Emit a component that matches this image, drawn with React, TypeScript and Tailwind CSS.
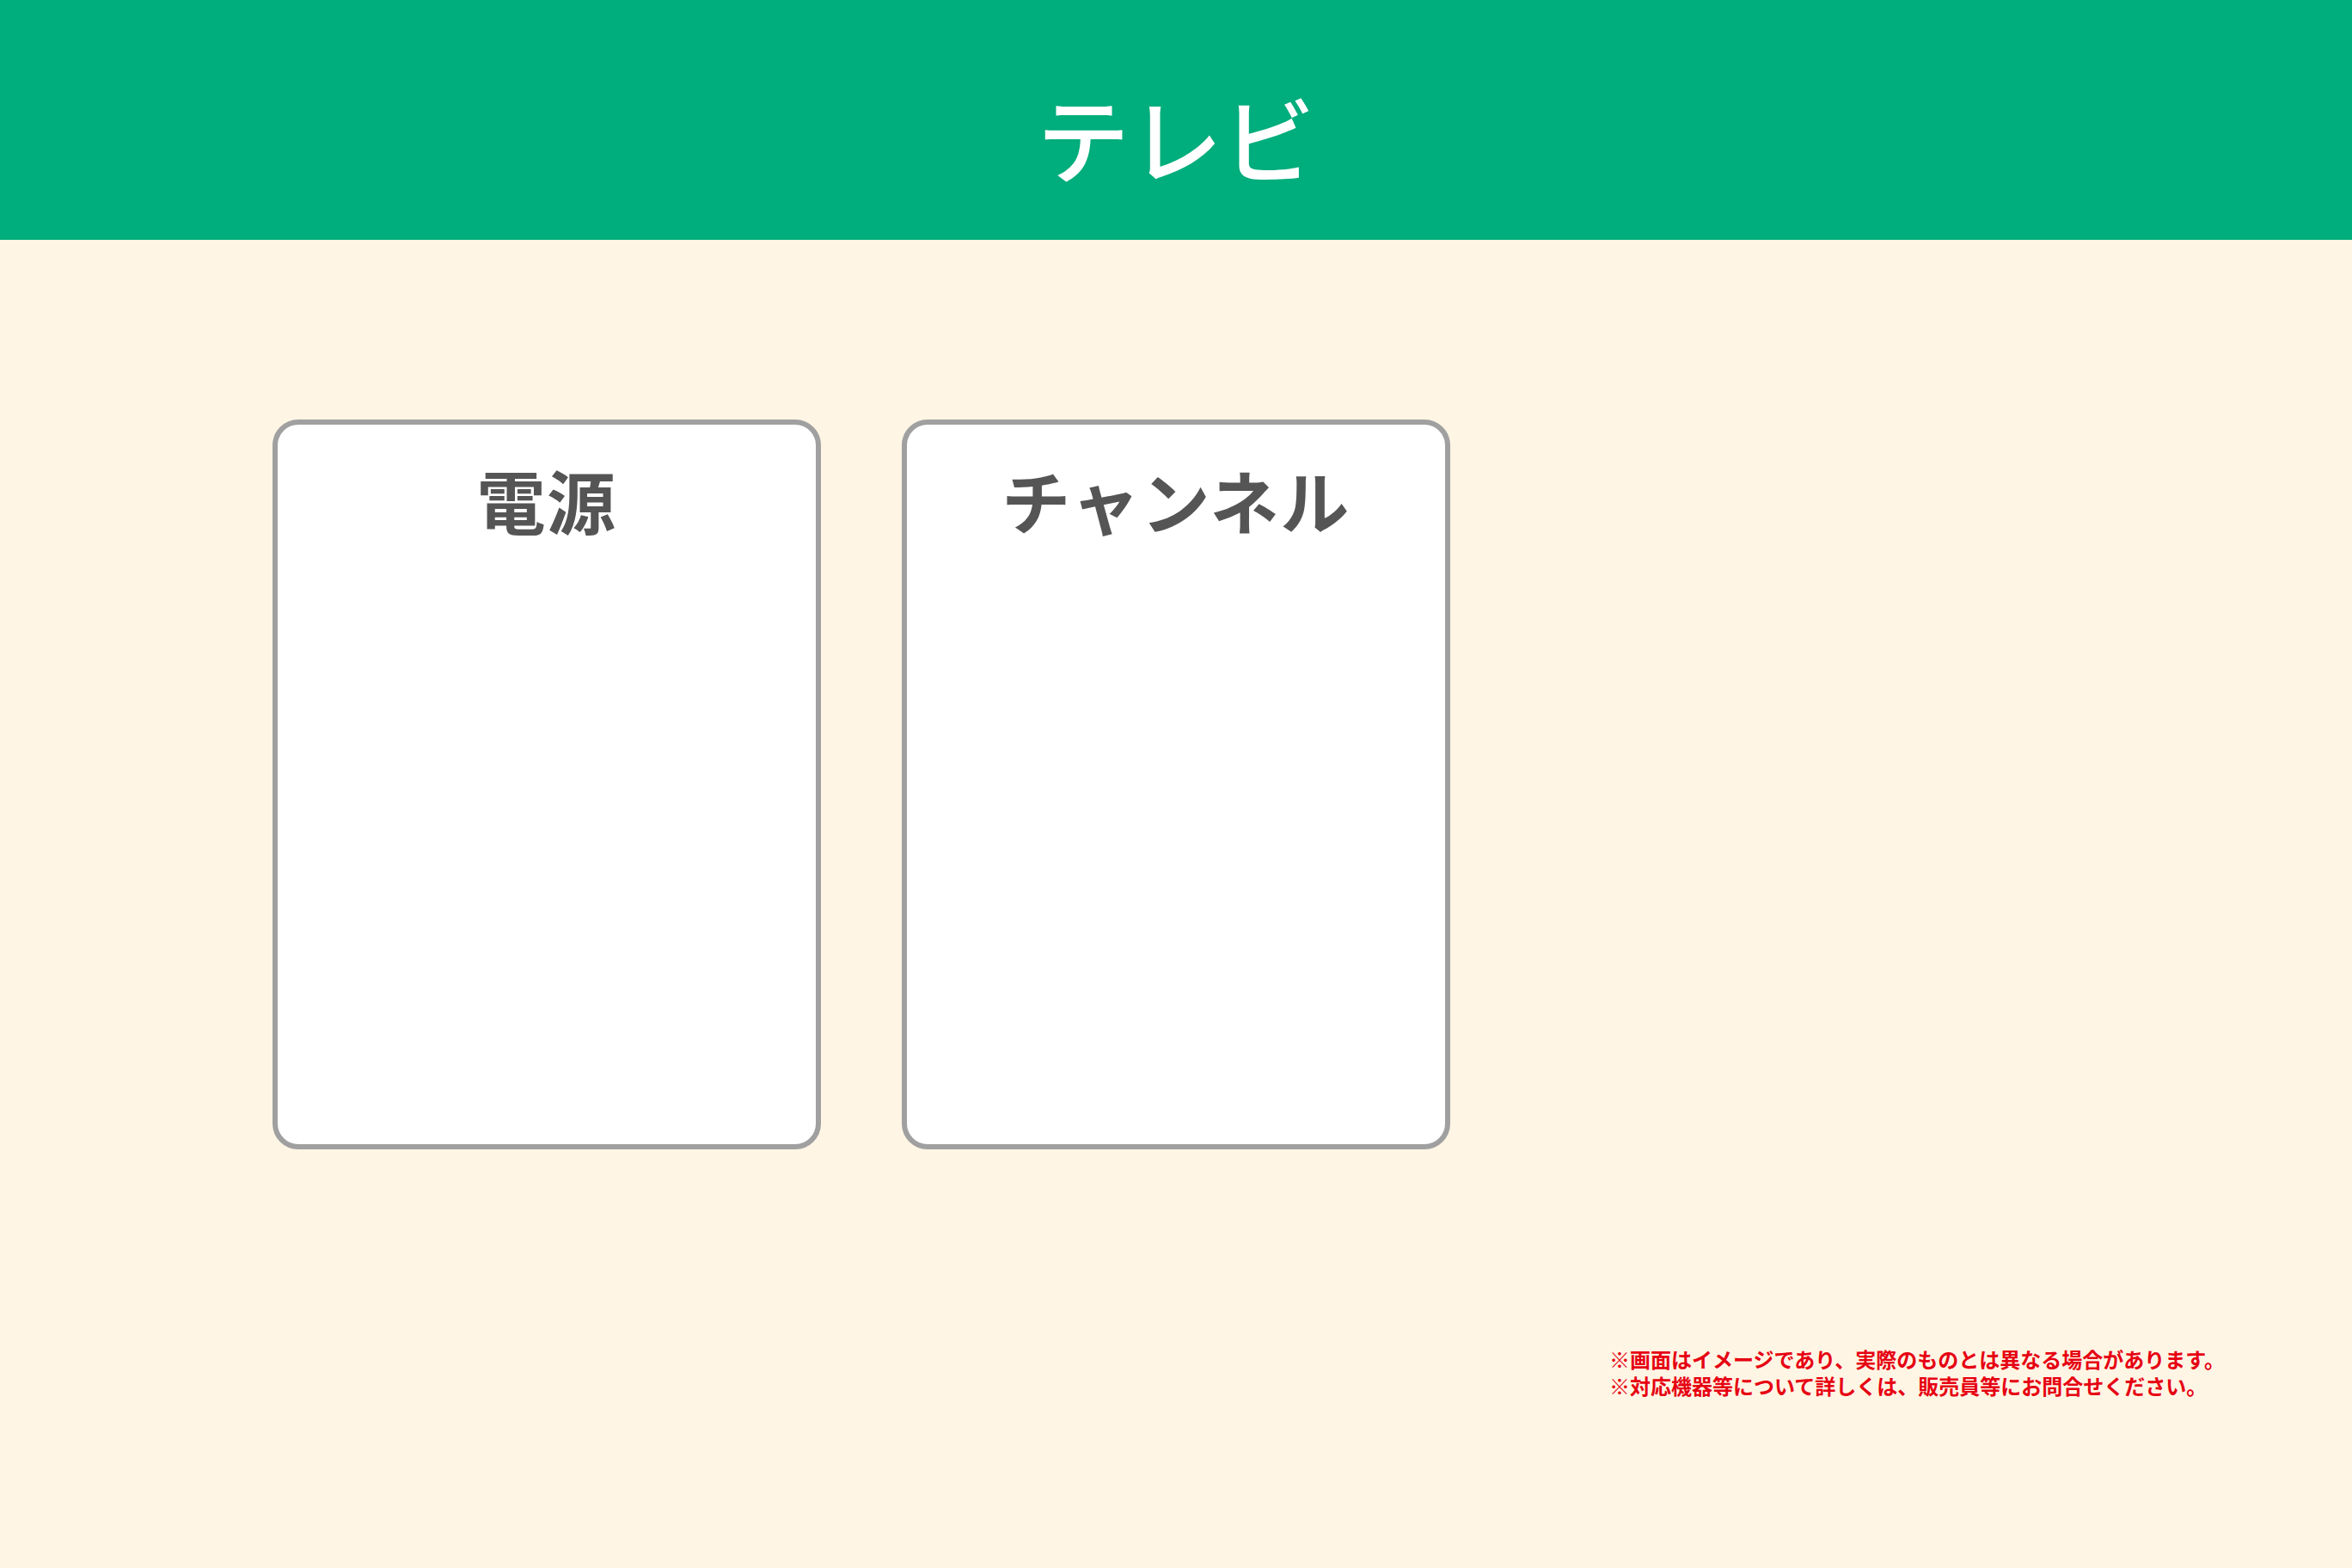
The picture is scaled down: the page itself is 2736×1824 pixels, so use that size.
const jp = "font-['Noto_Sans_CJK_JP','Noto_Sans',sans-serif]";

function Panel({ title }: { title: string }) {
  return (
    <div className="w-[638px] h-[849px] bg-white border-[6px] border-[#a0a0a0] rounded-[30px] flex flex-col items-center pt-[46px]">
      <h2 className={`${jp} text-[80px] leading-none font-bold text-[#555555] tracking-[0.02em]`}>{title}</h2>
    </div>
  );
}

export default function App() {
  return (
    <div className={`${jp} w-[2736px] h-[1824px] bg-[#fff5e4] flex flex-col`}>
      {/* header */}
      <header className="h-[279px] bg-[#00ad7c] flex justify-center pt-[104px]">
        <h1 className="text-[108px] leading-none font-medium text-white">テレビ</h1>
      </header>

      {/* panels */}
      <main className="flex gap-[94px] pl-[317px] mt-[209px]">
        <Panel title="電源" />
        <Panel title="チャンネル" />
      </main>

      {/* notes */}
      <div className="pl-[1872px] mt-[228px] text-[24px] leading-[31px] font-bold text-[#e60012]">
        <p>※画面はイメージであり、実際のものとは異なる場合があります。</p>
        <p>※対応機器等について詳しくは、販売員等にお問合せください。</p>
      </div>
    </div>
  );
}
